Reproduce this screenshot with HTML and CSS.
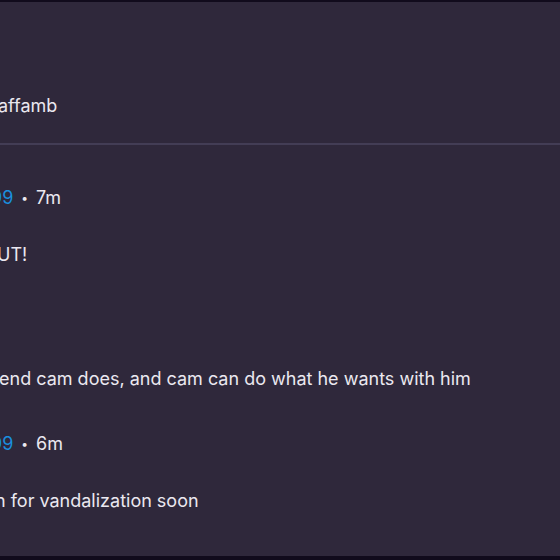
FILE: index.html
```html
<!DOCTYPE html>
<html>
<head>
<meta charset="utf-8">
<link rel="stylesheet" href="styles.css">
</head>
<body>
<div class="screen">
  <div class="topbar"></div>
  <div class="feed">
    <div class="post head">
      <p class="line name cut-a">affamb</p>
    </div>
    <div class="divider"></div>
    <div class="comment">
      <div class="line meta cut-b"><span class="user">99</span><span class="dot">•</span><span class="time">7m</span></div>
      <p class="line body cut-c">UT!</p>
    </div>
    <div class="comment second">
      <p class="line body cut-d">end cam does, and cam can do what he wants with him</p>
      <div class="line meta cut-b"><span class="user">99</span><span class="dot">•</span><span class="time">6m</span></div>
      <p class="line body cut-e">n for vandalization soon</p>
    </div>
  </div>
  <div class="bottombar"></div>
</div>
</body>
</html>
```
FILE: styles.css
```css
html, body {
  margin: 0;
  padding: 0;
  background: #2f283b;
}
.screen {
  width: 560px;
  height: 560px;
  overflow: hidden;
  display: flex;
  flex-direction: column;
  background: #2f283b;
  font-family: Inter, "Noto Sans", sans-serif;
  color: #ebe8f0;
}
.topbar {
  height: 2px;
  background: #110b1c;
  flex: none;
}
.feed {
  flex: 1;
  display: flex;
  flex-direction: column;
}
.line {
  margin: 0;
  font-size: 18px;
  line-height: 24px;
  white-space: nowrap;
}
.head {
  padding-top: 92px;
  height: 49px;
}
.divider {
  height: 2px;
  background: #433d55;
}
.comment {
  display: flex;
  flex-direction: column;
}
.comment .meta {
  margin-top: 41px;
  display: flex;
  align-items: center;
}
.comment .body {
  margin-top: 33px;
}
.second .body.cut-d {
  margin-top: 100px;
}
.second .meta {
  margin-top: 41px;
}
.user {
  color: #1a8fdf;
}
.dot {
  font-size: 12px;
  margin: 0 8px 0 8px;
}
.cut-a { margin-left: -2px; }
.cut-b { margin-left: -9px; }
.cut-c { margin-left: -3px; }
.cut-d { margin-left: -1px; }
.cut-e { margin-left: -5px; }
.bottombar {
  height: 4px;
  background: #110b1c;
  flex: none;
}
```
